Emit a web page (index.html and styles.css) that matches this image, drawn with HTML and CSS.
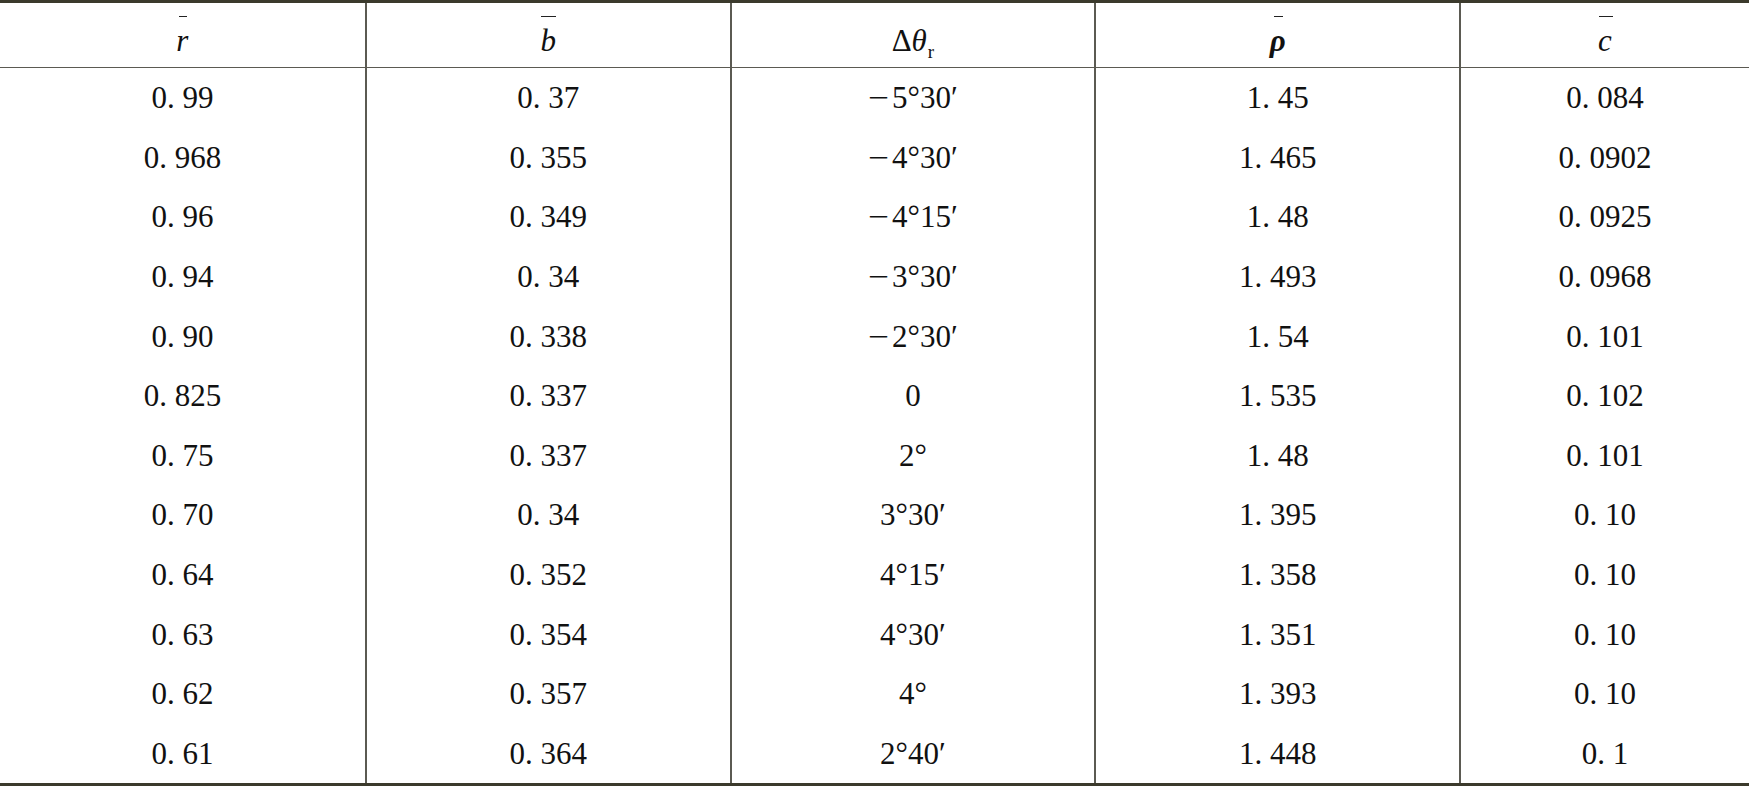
FILE: index.html
```html
<!DOCTYPE html>
<html lang="en">
<head>
    <meta charset="UTF-8">
    <meta name="viewport" content="width=device-width, initial-scale=1.0">
    <title>Blade Parameters</title>
    <link rel="stylesheet" href="styles.css">
</head>
<body>
    <table class="data-table">
        <colgroup>
            <col class="col-std">
            <col class="col-std">
            <col class="col-std">
            <col class="col-std">
            <col class="col-last">
        </colgroup>
        <thead>
            <tr>
                <th><span class="sym bar bar-r">r</span></th>
                <th><span class="sym bar bar-b">b</span></th>
                <th><span class="upright">Δ</span><span class="sym">θ</span><sub class="sub">r</sub></th>
                <th><span class="sym rho bar bar-rho">ρ</span></th>
                <th><span class="sym bar bar-c">c</span></th>
            </tr>
        </thead>
        <tbody>
            <tr><td>0. 99</td><td>0. 37</td><td><span class="minus">−</span>5°30′</td><td>1. 45</td><td>0. 084</td></tr>
            <tr><td>0. 968</td><td>0. 355</td><td><span class="minus">−</span>4°30′</td><td>1. 465</td><td>0. 0902</td></tr>
            <tr><td>0. 96</td><td>0. 349</td><td><span class="minus">−</span>4°15′</td><td>1. 48</td><td>0. 0925</td></tr>
            <tr><td>0. 94</td><td>0. 34</td><td><span class="minus">−</span>3°30′</td><td>1. 493</td><td>0. 0968</td></tr>
            <tr><td>0. 90</td><td>0. 338</td><td><span class="minus">−</span>2°30′</td><td>1. 54</td><td>0. 101</td></tr>
            <tr><td>0. 825</td><td>0. 337</td><td>0</td><td>1. 535</td><td>0. 102</td></tr>
            <tr><td>0. 75</td><td>0. 337</td><td>2°</td><td>1. 48</td><td>0. 101</td></tr>
            <tr><td>0. 70</td><td>0. 34</td><td>3°30′</td><td>1. 395</td><td>0. 10</td></tr>
            <tr><td>0. 64</td><td>0. 352</td><td>4°15′</td><td>1. 358</td><td>0. 10</td></tr>
            <tr><td>0. 63</td><td>0. 354</td><td>4°30′</td><td>1. 351</td><td>0. 10</td></tr>
            <tr><td>0. 62</td><td>0. 357</td><td>4°</td><td>1. 393</td><td>0. 10</td></tr>
            <tr><td>0. 61</td><td>0. 364</td><td>2°40′</td><td>1. 448</td><td>0. 1</td></tr>
        </tbody>
    </table>
</body>
</html>
```

FILE: styles.css
```css
body {
    margin: 0;
    background-color: #ffffff;
    font-family: "Liberation Serif", "Times New Roman", serif;
    color: #111111;
    overflow: hidden;
}
.data-table {
    width: 1749px;
    table-layout: fixed;
    border-collapse: separate;
    border-spacing: 0;
    border-top: 3px solid #3b3a2c;
    border-bottom: 3px solid #3b3a2c;
}
.col-std {
    width: 364.75px;
}
.col-last {
    width: 290px;
}
th, td {
    padding: 0;
    text-align: center;
    vertical-align: middle;
    font-size: 31px;
    font-weight: normal;
    white-space: nowrap;
}
th + th, td + td {
    border-left: 2px solid #5b5a52;
}
th {
    height: 54px;
    border-bottom: 1px solid #5b5a52;
    padding-top: 10px;
    line-height: 1;
}
td {
    height: 59.6px;
    line-height: 1;
}
.minus {
    display: inline-block;
    width: 24px;
    text-align: left;
    transform: scaleX(1.2);
    transform-origin: left center;
}
.sym {
    font-style: italic;
}
.upright {
    font-style: normal;
}
.rho {
    font-weight: bold;
}
.sub {
    font-size: 19px;
    vertical-align: -7px;
    line-height: 0;
    margin-left: 1px;
}
.bar {
    position: relative;
    display: inline-block;
}
.bar::before {
    content: "";
    position: absolute;
    left: 50%;
    top: -9px;
    border-top: 1px solid #222222;
}
.bar-r::before {
    width: 8px;
    margin-left: -3px;
}
.bar-b::before {
    width: 15px;
    margin-left: -7px;
}
.bar-rho::before {
    width: 9px;
    margin-left: -4px;
}
.bar-c::before {
    width: 14px;
    margin-left: -6px;
}
```
